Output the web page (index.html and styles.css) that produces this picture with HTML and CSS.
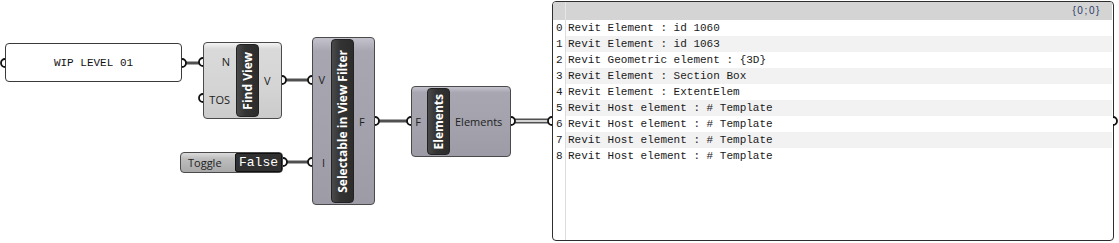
FILE: index.html
```html
<!DOCTYPE html>
<html lang="en">

<head>
    <meta charset="UTF-8">
    <meta name="viewport" content="width=device-width, initial-scale=1.0">
    <title>Grasshopper - Find View</title>
    <link rel="stylesheet" href="styles.css">
</head>

<body>
    <div class="canvas">
        <!-- text panel -->
        <div class="panel n-wip">WIP LEVEL 01</div>

        <!-- Find View -->
        <div class="comp comp-light n-find">
            <div class="ins"><span>N</span><span>TOS</span></div>
            <div class="label"><span>Find View</span></div>
            <div class="outs"><span>V</span></div>
        </div>

        <!-- boolean toggle -->
        <div class="toggle n-toggle">
            <span class="t-name">Toggle</span>
            <span class="t-val">False</span>
        </div>

        <!-- Selectable in View Filter -->
        <div class="comp n-filter">
            <div class="ins"><span>V</span><span>I</span></div>
            <div class="label"><span>Selectable in View Filter</span></div>
            <div class="outs"><span>F</span></div>
        </div>

        <!-- Elements -->
        <div class="comp n-elems">
            <div class="ins"><span>F</span></div>
            <div class="label"><span>Elements</span></div>
            <div class="outs"><span>Elements</span></div>
        </div>

        <!-- output panel -->
        <div class="list n-list">
            <div class="list-head"><span class="idx"></span><span class="path">{0;0}</span></div>
            <div class="list-body">
                <div class="row"><span class="idx">0</span><span class="val">Revit Element : id 1060</span></div>
                <div class="row"><span class="idx">1</span><span class="val">Revit Element : id 1063</span></div>
                <div class="row"><span class="idx">2</span><span class="val">Revit Geometric element : {3D}</span></div>
                <div class="row"><span class="idx">3</span><span class="val">Revit Element : Section Box</span></div>
                <div class="row"><span class="idx">4</span><span class="val">Revit Element : ExtentElem</span></div>
                <div class="row"><span class="idx">5</span><span class="val">Revit Host element : # Template</span></div>
                <div class="row"><span class="idx">6</span><span class="val">Revit Host element : # Template</span></div>
                <div class="row"><span class="idx">7</span><span class="val">Revit Host element : # Template</span></div>
                <div class="row"><span class="idx">8</span><span class="val">Revit Host element : # Template</span></div>
            </div>
        </div>

        <!-- wires + grips, drawn over the nodes -->
        <svg class="wires" width="1119" height="243" viewBox="0 0 1119 243">
            <g stroke="#505050" stroke-width="3" fill="none">
                <path d="M182 63 H203" />
                <path d="M282 80 H312" />
                <path d="M283 162 H312" />
                <path d="M375 121 H411" />
            </g>
            <!-- list wire -->
            <path d="M511 121 H552" stroke="#505050" stroke-width="5" fill="none" />
            <path d="M511 121 H552" stroke="#fff" stroke-width="1.4" fill="none" />

            <g stroke="#111" stroke-width="1.8" fill="#fff">
                <!-- inputs -->
                <path d="M5 59 A4 4 0 0 0 5 67" />
                <path d="M203 58 A4 4 0 0 0 203 66" />
                <path d="M203 94 A4 4 0 0 0 203 102" />
                <path d="M312 76 A4 4 0 0 0 312 84" />
                <path d="M312 158 A4 4 0 0 0 312 166" />
                <path d="M411 117 A4 4 0 0 0 411 125" />
                <path d="M552 117 A4 4 0 0 0 552 125" />
                <!-- outputs -->
                <path d="M182 59 A4 4 0 0 1 182 67" />
                <path d="M282 76 A4 4 0 0 1 282 84" />
                <path d="M283 158 A4 4 0 0 1 283 166" />
                <path d="M375 117 A4 4 0 0 1 375 125" />
                <path d="M511 117 A4 4 0 0 1 511 125" />
                <path d="M1113 117 A4 4 0 0 1 1113 125" />
            </g>
        </svg>
    </div>
</body>

</html>
```

FILE: styles.css
```css
* {
    margin: 0;
    padding: 0;
    box-sizing: border-box;
}

body {
    background: #fff;
    font-family: "Open Sans", "Liberation Sans", sans-serif;
    color: #222;
}

.canvas {
    position: relative;
    width: 1119px;
    height: 243px;
    overflow: hidden;
}

.wires {
    position: absolute;
    left: 0;
    top: 0;
    pointer-events: none;
}

/* text panel */
.panel {
    position: absolute;
    display: flex;
    justify-content: center;
    align-items: center;
    background: #fff;
    border: 1px solid #3a3a3a;
    border-radius: 4px;
    font-family: "Liberation Mono", monospace;
    font-size: 11px;
    color: #111;
}

/* components */
.comp {
    position: absolute;
    display: flex;
    border: 1px solid #4a4a4a;
    border-radius: 4px;
    background: linear-gradient(#c4c3cd, #a7a6b1 8%, #a2a1ac 60%, #9c9ba6);
    font-size: 11px;
}

.comp-light {
    background: linear-gradient(#f4f4f4, #dadada 8%, #d4d4d4 60%, #cbcbcb);
}

.ins,
.outs {
    display: flex;
    flex-direction: column;
    justify-content: space-around;
    flex: none;
}

.ins {
    align-items: flex-end;
    padding-right: 6px;
}

.outs {
    align-items: flex-start;
    padding-left: 5px;
}

.label {
    flex: none;
    width: 23px;
    margin: 1px 0;
    display: flex;
    align-items: center;
    justify-content: center;
    background: linear-gradient(to right, #4a4a4a, #333 40%, #2c2c2c);
    border: 1px solid #222;
    border-radius: 4px;
}

.label span {
    writing-mode: vertical-rl;
    transform: rotate(180deg);
    color: #fff;
    font-weight: 700;
    font-size: 12px;
    white-space: nowrap;
}

.n-wip {
    left: 5px;
    top: 43px;
    width: 177px;
    height: 39px;
}

.n-find {
    left: 203px;
    top: 42px;
    width: 79px;
    height: 77px;
}

.n-find .ins {
    width: 32px;
}

.n-filter {
    left: 312px;
    top: 37px;
    width: 63px;
    height: 168px;
}

.n-filter .ins {
    width: 18px;
}

.n-elems {
    left: 411px;
    top: 86px;
    width: 100px;
    height: 71px;
}

.n-elems .ins {
    width: 15px;
}

/* boolean toggle */
.toggle {
    position: absolute;
    display: flex;
    align-items: center;
    border: 1px solid #4a4a4a;
    border-radius: 4px;
    background: linear-gradient(#dcdcdc, #bdbdbd 30%, #a9a9a9);
    font-size: 11px;
}

.n-toggle {
    left: 180px;
    top: 152px;
    width: 103px;
    height: 21px;
}

.t-name {
    flex: 1;
    padding-left: 7px;
}

.t-val {
    width: 47px;
    height: 19px;
    display: flex;
    align-items: center;
    justify-content: center;
    background: #303030;
    border: 1px solid #111;
    border-radius: 2px;
    color: #fff;
    font-family: "Liberation Mono", monospace;
    font-size: 13px;
}

/* output list panel */
.list {
    position: absolute;
    display: flex;
    flex-direction: column;
    background: #fff;
    border: 1px solid #2e2e2e;
    border-radius: 4px;
    overflow: hidden;
    font-family: "Liberation Mono", monospace;
    font-size: 11px;
    color: #1a1a1a;
}

.n-list {
    left: 552px;
    top: 1px;
    width: 562px;
    height: 240px;
}

.list-head {
    display: flex;
    height: 18px;
    background: #d4d4d4;
    margin-right: 1px;
}

.list-head .idx {
    width: 13px;
    border-right: 1px solid #e6e6e6;
}

.path {
    flex: 1;
    text-align: right;
    padding-right: 11px;
    line-height: 18px;
    font-family: "Liberation Sans", sans-serif;
    font-size: 10px;
    letter-spacing: 1.6px;
    color: #2b3a66;
}

.list-body {
    flex: 1;
    background: linear-gradient(to right, transparent 12px, #dcdcdc 12px, #dcdcdc 13px, transparent 13px);
}

.row {
    display: flex;
    height: 16px;
    align-items: center;
    margin-right: 1px;
}

.row:nth-child(even) {
    background: #f2f2f2;
}

.row .idx {
    width: 13px;
    height: 16px;
    line-height: 16px;
    padding-left: 3px;
    border-right: 1px solid #dcdcdc;
    background: #fff;
}

.val {
    padding-left: 2px;
    white-space: pre;
}
```
